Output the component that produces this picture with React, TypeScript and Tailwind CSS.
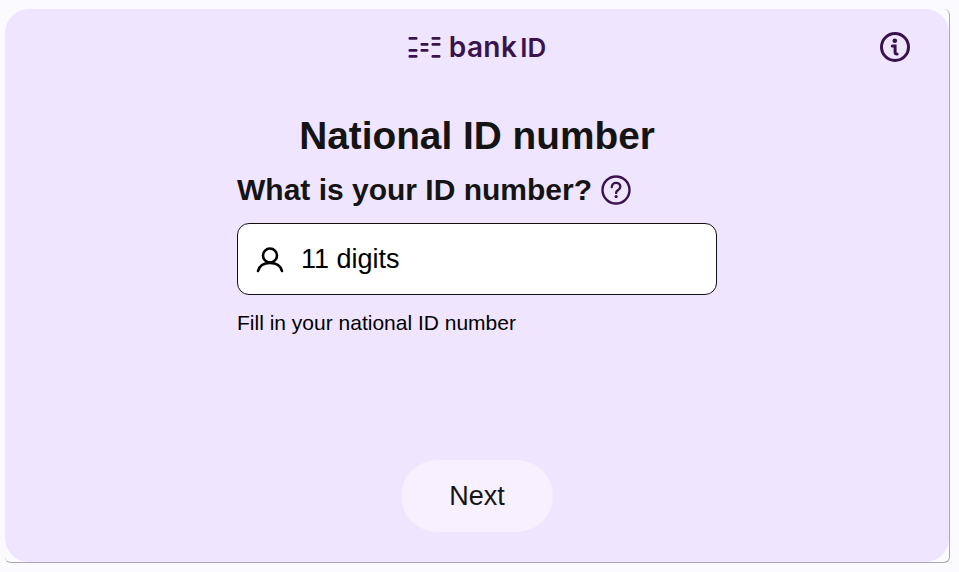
export default function App() {
  return (
    <div className="h-[572px] w-[959px] overflow-hidden bg-[#fafaff] pl-[5px] pt-[9px] font-['Liberation_Sans',Arial,sans-serif]">
      <div className="h-[554px] w-[945px] rounded-[6px] border-r border-b border-[#a9a6b0]">
        <div className="flex h-[553px] w-[944px] flex-col items-center rounded-[24px] bg-[#efe5ff]">
          <div className="relative flex h-[76px] w-full items-center justify-center">
            <div className="flex items-center gap-[8px] text-[#39134c]">
              <svg width="33" height="21" viewBox="0 0 33 21" fill="#39134c" aria-hidden="true">
                <rect x="0.500" y="0" width="9" height="2.800" rx="1.200" />
                <rect x="23.500" y="0" width="9" height="2.800" rx="1.200" />
                <rect x="12.500" y="6" width="8" height="2.800" rx="1.200" />
                <rect x="23.500" y="6" width="9" height="2.800" rx="1.200" />
                <rect x="0.500" y="12" width="9" height="2.800" rx="1.200" />
                <rect x="12.500" y="12" width="8" height="2.800" rx="1.200" />
                <rect x="0.500" y="18" width="9" height="2.800" rx="1.200" />
                <rect x="23.500" y="18" width="9" height="2.800" rx="1.200" />
              </svg>
              <span className="flex items-baseline font-['Inter',sans-serif] text-[28px] leading-none font-semibold">
                <span className="tracking-[0.4px]">bank</span>
                <span className="ml-[3px] text-[26px]">ID</span>
              </span>
            </div>
            <button className="absolute left-[874px] top-[22px] text-[#39134c]" aria-label="Information">
              <svg className="block" width="32" height="32" viewBox="0 0 32 32" fill="none" stroke="#39134c">
                <circle cx="16" cy="16" r="13.500" strokeWidth="3" />
                <circle cx="15.800" cy="9.800" r="2.300" fill="#39134c" stroke="none" />
                <path d="M13.300 15h2.800v6.300c0 1.200.7 1.700 2 1.700" strokeWidth="3" strokeLinecap="round" />
              </svg>
            </button>
          </div>
          <h1 className="mt-[30px] text-[38.8px] leading-[41px] font-bold text-[#141414]">National ID number</h1>
          <div className="mt-[17px] w-[480px]">
            <div className="flex items-center gap-[9px]">
              <span className="text-[30px] leading-[34px] font-bold text-[#141414]">What is your ID number?</span>
              <svg width="30" height="30" viewBox="0 0 30 30" fill="none" stroke="#39134c" aria-hidden="true">
                <circle cx="15" cy="15" r="13.500" strokeWidth="2.400" />
                <path d="M10.800 12c0-2.500 1.900-4.100 4.300-4.100s4.200 1.600 4.200 3.800c0 3.400-4.200 3.100-4.200 6.200" strokeWidth="2.400" strokeLinecap="round" />
                <circle cx="15.100" cy="21.600" r="1.600" fill="#39134c" stroke="none" />
              </svg>
            </div>
            <div className="mt-[16px] flex h-[72px] w-[480px] items-center rounded-[12px] border border-[#111111] bg-white pl-[18px]">
              <svg width="28" height="28" viewBox="0 0 28 28" fill="none" stroke="#000" strokeWidth="2.600" strokeLinecap="round" aria-hidden="true">
                <circle cx="14" cy="10.500" r="7" />
                <path d="M2 26c1.200-4.800 5-8 12-8s10.800 3.200 12 8" />
              </svg>
              <span className="ml-[17px] text-[27px] leading-none text-black">11 digits</span>
            </div>
            <p className="mt-[16px] text-[21px] leading-[24px] text-black">Fill in your national ID number</p>
          </div>
          <button className="mt-[125px] flex h-[72px] w-[152px] items-center justify-center rounded-full bg-[#f6f0ff] text-[27px] text-[#141414]">Next</button>
        </div>
      </div>
    </div>
  );
}
